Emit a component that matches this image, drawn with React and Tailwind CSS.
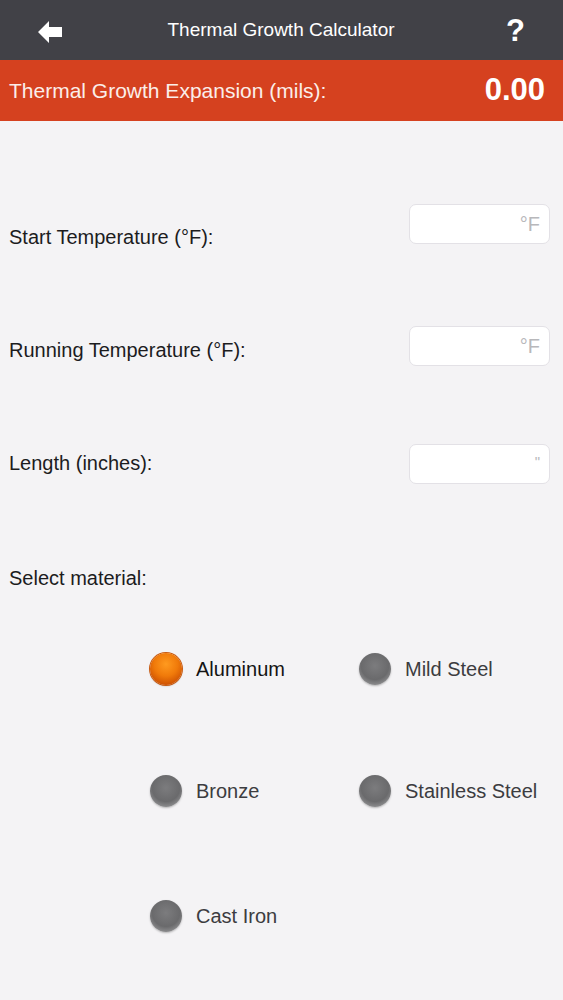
import { useState } from 'react';

const materials = [
  ['Aluminum', 'Mild Steel'],
  ['Bronze', 'Stainless Steel'],
  ['Cast Iron', null],
];

function Radio({ label, checked, onClick }) {
  return (
    <button onClick={onClick} className="flex items-center gap-[14px] text-left">
      <span
        className={`w-[32px] h-[32px] rounded-full shrink-0 shadow-[0_1px_2px_rgba(0,0,0,0.25)] ${
          checked
            ? 'bg-[radial-gradient(circle_at_50%_35%,#ff9a1f_0%,#f07a0a_45%,#c84a00_85%,#b34000_100%)] ring-1 ring-[#c95a10]'
            : 'bg-[radial-gradient(circle_at_50%_40%,#7c7c7e_0%,#6a6a6c_55%,#8d8d8f_78%,#c2c2c4_100%)]'
        }`}
      />
      <span className={`text-[20px] ${checked ? 'text-[#141414]' : 'text-[#3c3c40]'}`}>{label}</span>
    </button>
  );
}

function Field({ label, unit, unitClass, labelClass }) {
  return (
    <div className="flex items-end justify-between pl-[9px] pr-[13px] h-[40px]">
      <span className={`text-[20px] leading-none text-[#1c1c1e] ${labelClass}`}>{label}</span>
      <div className="w-[141px] h-[40px] bg-white border border-[#e3e1e6] rounded-[7px] flex items-center justify-end pr-[9px]">
        <span className={unitClass}>{unit}</span>
      </div>
    </div>
  );
}

export default function App() {
  const [material, setMaterial] = useState('Aluminum');

  return (
    <div className="w-[563px] min-h-[1000px] bg-[#f4f3f5] font-[Liberation_Sans,Arial,sans-serif]">
      {/* Top bar */}
      <div className="h-[60px] bg-[#414147] flex items-center justify-between px-[38px] pr-[38px]">
        <svg width="24" height="22" viewBox="0 0 24 22" className="translate-y-[2px]">
          <path d="M0 11 L11 0 L11 6 L24 6 L24 16 L11 16 L11 22 Z" fill="#ffffff" />
        </svg>
        <span className="text-white text-[19px] translate-x-[-3px]">Thermal Growth Calculator</span>
        <span className="text-white text-[31px] font-bold leading-none">?</span>
      </div>

      {/* Result bar */}
      <div className="h-[61px] bg-[#d5411f] flex items-center justify-between pl-[9px] pr-[18px]">
        <span className="text-[#fbeee9] text-[21px]">Thermal Growth Expansion (mils):</span>
        <span className="text-white text-[31px] font-bold">0.00</span>
      </div>

      <div className="mt-[83px]">
        <Field label="Start Temperature (°F):" unit="°F" unitClass="text-[20px] text-[#b8b8bb]" labelClass="translate-y-[3px]" />
      </div>
      <div className="mt-[82px]">
        <Field label="Running Temperature (°F):" unit="°F" unitClass="text-[20px] text-[#b8b8bb]" labelClass="-translate-y-[6px]" />
      </div>
      <div className="mt-[78px]">
        <Field label="Length (inches):" unit={'"'} unitClass="text-[15px] text-[#b8b8bb] -translate-y-[2px]" labelClass="-translate-y-[11px]" />
      </div>

      <div className="mt-[79px] pl-[9px] text-[20px] text-[#1c1c1e]">Select material:</div>

      <div className="mt-[60px] flex flex-col gap-[90px]">
        {materials.map((row, i) => (
          <div key={i} className={`grid grid-cols-[209px_1fr] pl-[150px] ${i === 2 ? 'mt-[3px]' : ''}`}>
            <Radio label={row[0]} checked={material === row[0]} onClick={() => setMaterial(row[0])} />
            {row[1] && (
              <Radio label={row[1]} checked={material === row[1]} onClick={() => setMaterial(row[1])} />
            )}
          </div>
        ))}
      </div>
    </div>
  );
}
